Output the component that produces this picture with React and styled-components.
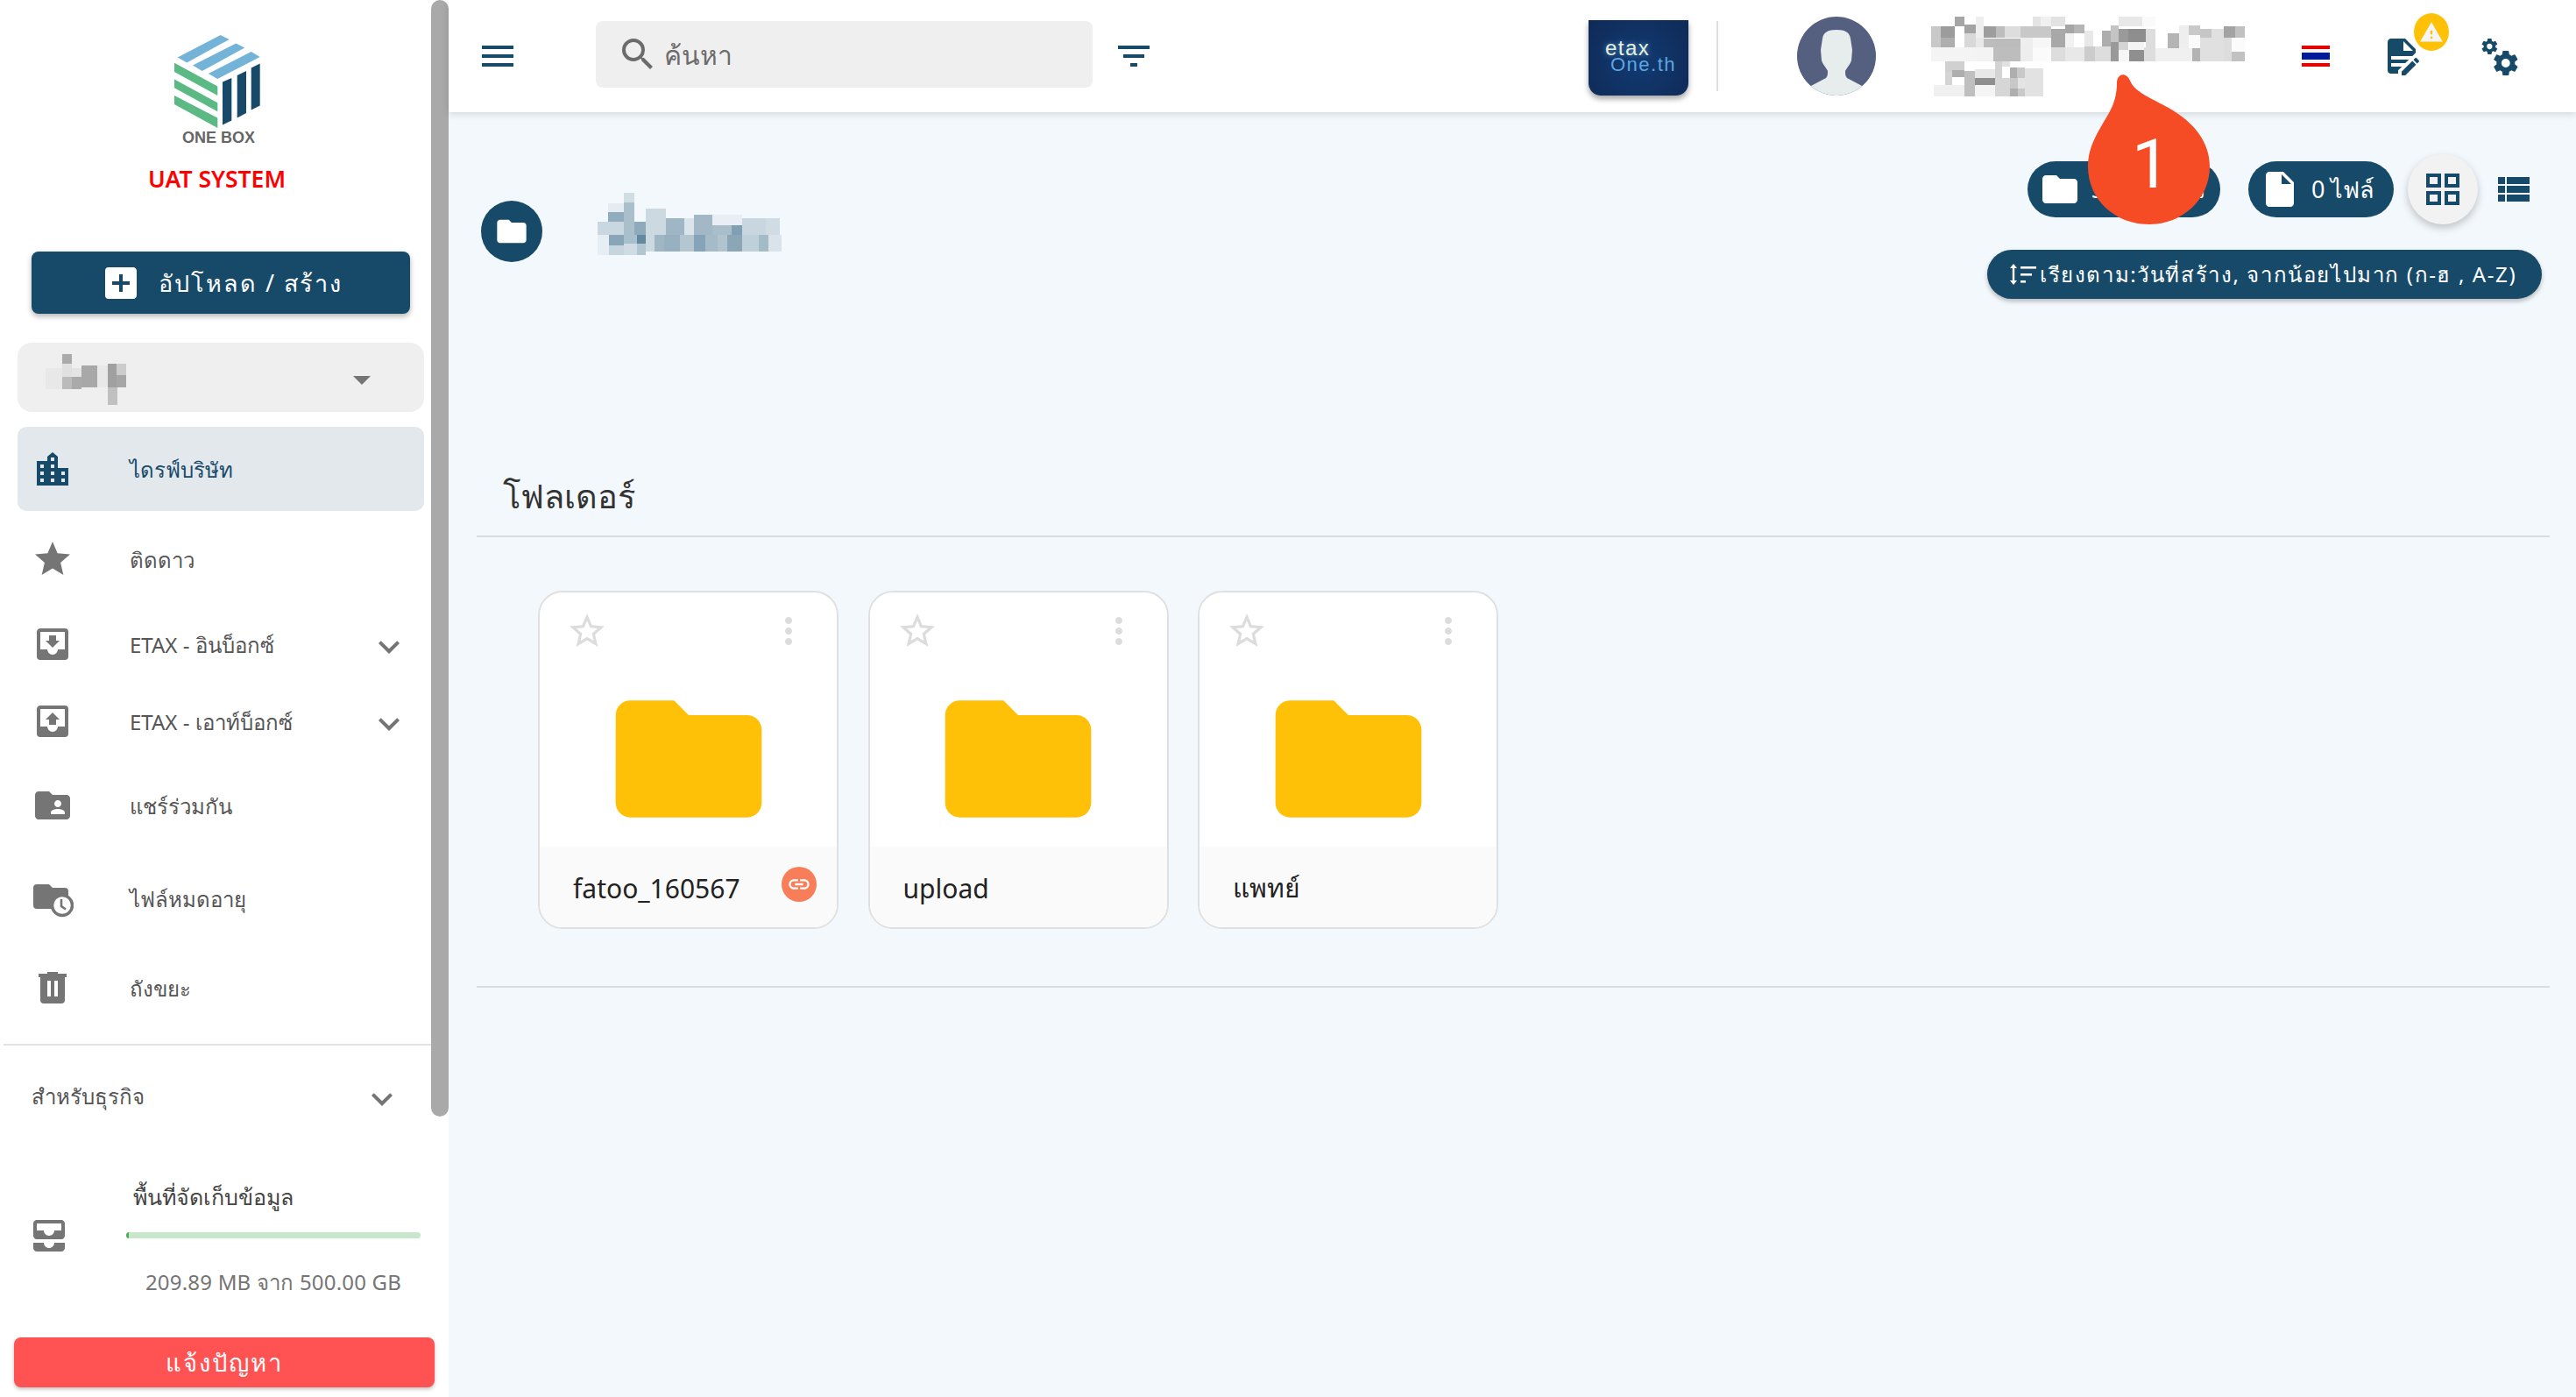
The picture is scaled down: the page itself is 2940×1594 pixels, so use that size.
import React from "react";
import styled, { createGlobalStyle } from "styled-components";
import {
  MdAddBox,
  MdAllInbox,
  MdArrowDropDown,
  MdExpandMore,
  MdFilterList,
  MdFolder,
  MdFolderShared,
  MdInsertDriveFile,
  MdLink,
  MdMenu,
  MdMoreVert,
  MdSearch,
  MdStar,
  MdStarBorder,
  MdViewList,
  MdWarning,
} from "react-icons/md";

const NAVY = "#174a69";

const GlobalStyle = createGlobalStyle`
  html, body {
    margin: 0;
    height: 100%;
    overflow: hidden;
    background: #f3f8fc;
    font-family: "Noto Sans", "Open Sans", sans-serif;
  }
`;

const Page = styled.div`
  position: relative;
  display: flex;
  width: 2940px;
  height: 1594px;
  overflow: hidden;
`;

/* ---------- sidebar ---------- */

const Sidebar = styled.aside`
  display: flex;
  flex: 0 0 512px;
  height: 100%;
  background: #fff;
`;

const SideBody = styled.div`
  display: flex;
  flex-direction: column;
  flex: 0 0 492px;
  min-width: 0;
`;

const ScrollTrack = styled.div`
  flex: 0 0 20px;
`;

const ScrollThumb = styled.div`
  height: 1274px;
  background: #a9a9a9;
  border-radius: 10px;
`;

const Brand = styled.div`
  display: flex;
  flex-direction: column;
  height: 287px;
  padding-top: 40px;
  box-sizing: border-box;
  align-items: center;
  padding-left: 4px;
`;

const BrandCaption = styled.div`
  margin: 1px 0 0 3px;
  font-family: "Liberation Sans", sans-serif;
  font-size: 18px;
  line-height: 20px;
  font-weight: 700;
  color: #666;
`;

const SystemName = styled.div`
  margin-top: 19px;
  margin-left: -1px;
  font-size: 26.5px;
  line-height: 36px;
  font-weight: 600;
  color: #f00;
`;

const UploadButton = styled.button`
  display: flex;
  align-items: center;
  gap: 19px;
  width: 432px;
  height: 71px;
  margin-left: 36px;
  padding: 0 0 0 78px;
  border: 0;
  border-radius: 8px;
  background: ${NAVY};
  color: #fff;
  font: inherit;
  font-size: 27px;
  letter-spacing: 2px;
  box-shadow: 0 3px 6px rgba(0, 0, 0, 0.3);
`;

const UploadLabel = styled.span`
  padding-top: 2px;
`;

const Switcher = styled.div`
  display: flex;
  align-items: center;
  justify-content: space-between;
  width: 464px;
  height: 79px;
  margin: 33px 0 0 20px;
  padding: 4px 47px 0 32px;
  box-sizing: border-box;
  border-radius: 16px;
  background: #efefef;
  color: #757575;
`;

const NavRow = styled.div`
  display: flex;
  align-items: center;
  width: 464px;
  height: ${(p) => p.$h}px;
  margin-top: ${(p) => p.$mt || 0}px;
  margin-left: 20px;
  padding-right: 16px;
  box-sizing: border-box;
  border-radius: 10px;
  background: ${(p) => (p.$active ? "#e3e8ed" : "transparent")};
  color: ${(p) => (p.$active ? NAVY : "#555")};
  font-size: 24px;
`;

const NavIcon = styled.span`
  display: flex;
  justify-content: center;
  flex: 0 0 80px;
  margin-right: 48px;
  color: ${(p) => (p.$active ? NAVY : "#757575")};
`;

const NavLabel = styled.span`
  flex: 1;
  padding-top: 2px;
`;

const NavChevron = styled.span`
  display: flex;
  margin-top: 6px;
  color: #757575;
`;

const SideDivider = styled.div`
  width: 488px;
  height: 2px;
  margin: 18px 0 0 4px;
  background: #e3e3e3;
`;

const SectionRow = styled.div`
  display: flex;
  align-items: center;
  justify-content: space-between;
  height: 116px;
  padding: 0 32px 0 36px;
  color: #555;
  font-size: 24px;
`;

const Storage = styled.div`
  display: flex;
  align-items: flex-start;
  height: 217px;
  padding: 31px 0 0 32px;
  box-sizing: border-box;
  color: #757575;
`;

const StorageIcon = styled.span`
  display: flex;
  margin-top: 46px;
`;

const StorageInfo = styled.div`
  display: flex;
  flex-direction: column;
  width: 336px;
  margin-left: 64px;
`;

const StorageLabel = styled.div`
  margin-left: 8px;
  height: 50px;
  line-height: 50px;
  font-size: 25px;
  color: #444;
`;

const StorageBar = styled.div`
  height: 7px;
  margin-top: 16px;
  border-radius: 4px;
  background: #c8e6c9;
  overflow: hidden;
`;

const StorageFill = styled.div`
  width: 3px;
  height: 100%;
  background: #4caf50;
`;

const StorageText = styled.div`
  margin-top: 32px;
  text-align: center;
  font-size: 24px;
  letter-spacing: 0.2px;
  line-height: 36px;
  color: #757575;
`;

const ReportButton = styled.button`
  display: block;
  width: 480px;
  height: 57px;
  margin: 0 0 0 16px;
  border: 0;
  border-radius: 8px;
  background: #ff5252;
  color: #fff;
  font: inherit;
  font-size: 27.5px;
  letter-spacing: 2px;
  box-shadow: 0 2px 4px rgba(0, 0, 0, 0.25);
`;

/* ---------- top bar ---------- */

const Main = styled.main`
  display: flex;
  flex-direction: column;
  flex: 1;
  min-width: 0;
  background: #f3f8fc;
`;

const TopBar = styled.header`
  display: flex;
  align-items: center;
  flex: 0 0 128px;
  padding-left: 32px;
  background: #fff;
  color: ${NAVY};
  box-shadow: 0 2px 8px rgba(0, 0, 0, 0.14);
`;

const SearchBox = styled.div`
  display: flex;
  align-items: center;
  gap: 6px;
  width: 567px;
  height: 76px;
  margin: -4px 23px 0 88px;
  padding-left: 24px;
  box-sizing: border-box;
  border-radius: 8px;
  background: #efefef;
  color: #6b6b6b;
  font-size: 30px;
`;

const SearchLabel = styled.span`
  padding-top: 3px;
`;

const EtaxTile = styled.div`
  display: flex;
  flex-direction: column;
  justify-content: center;
  flex: 0 0 114px;
  height: 86px;
  margin: 4px 0 0 495px;
  padding: 0 0 4px 19px;
  box-sizing: border-box;
  border-radius: 0 0 14px 14px;
  background: radial-gradient(circle at 50% 55%, #123a72, #0f2a56);
  box-shadow: 0 4px 6px rgba(0, 0, 0, 0.35);
  font-family: "Liberation Sans", sans-serif;
  line-height: 19px;
  letter-spacing: 1.5px;
`;

const EtaxTop = styled.span`
  color: #e8f0d8;
  font-size: 24px;
  text-shadow: 0 0 6px rgba(94, 166, 224, 0.9);
`;

const EtaxBottom = styled.span`
  margin-left: 6px;
  color: #5ea6e0;
  font-size: 22px;
`;

const BarDivider = styled.div`
  flex: 0 0 2px;
  height: 80px;
  margin: 0 90px 0 32px;
  background: #e0e0e0;
`;

const Avatar = styled.svg`
  flex: 0 0 90px;
  margin-right: 62px;
`;

const ActionIcon = styled.span`
  position: relative;
  display: flex;
  margin-left: ${(p) => p.$left || 0}px;
`;

const WarnBadge = styled.span`
  position: absolute;
  top: -25px;
  left: 38px;
  display: flex;
  align-items: center;
  justify-content: center;
  width: 40px;
  height: 43px;
  border-radius: 50%;
  background: #ffc107;
  color: #f5f5f5;
`;

/* ---------- content ---------- */

const HeadArea = styled.section`
  display: flex;
  justify-content: space-between;
  height: 412px;
  padding: 48px 39px 0 37px;
  box-sizing: border-box;
`;

const FolderCrumb = styled.div`
  display: flex;
  align-items: flex-start;
  gap: 63px;
  margin-top: 44px;
`;

const CrumbIcon = styled.span`
  display: flex;
  align-items: center;
  justify-content: center;
  width: 70px;
  height: 70px;
  margin-top: 9px;
  border-radius: 50%;
  background: ${NAVY};
  color: #fff;
`;

const HeadTools = styled.div`
  display: flex;
  flex-direction: column;
  align-items: flex-end;
`;

const ToolRow = styled.div`
  display: flex;
  align-items: center;
  padding-right: 8px;
  height: 80px;
`;

const CountPill = styled.div`
  display: flex;
  align-items: center;
  gap: 12px;
  width: ${(p) => p.$w}px;
  height: 64px;
  margin-right: ${(p) => p.$gap}px;
  padding-left: ${(p) => p.$pad}px;
  box-sizing: border-box;
  border-radius: 32px;
  background: ${NAVY};
  color: #fff;
  font-size: 27px;
  white-space: nowrap;
`;

const ToggleButton = styled.span`
  display: flex;
  align-items: center;
  justify-content: center;
  width: 80px;
  height: 80px;
  margin-right: 17px;
  border-radius: 50%;
  background: #f2f2f2;
  box-shadow: 0 4px 10px rgba(0, 0, 0, 0.22);
`;

const ListToggle = styled.span`
  display: flex;
  color: ${NAVY};
`;

const SortPill = styled.div`
  display: flex;
  align-items: center;
  gap: 4px;
  width: 633px;
  height: 56px;
  margin-top: 29px;
  padding-left: 26px;
  box-sizing: border-box;
  border-radius: 28px;
  background: ${NAVY};
  color: #fff;
  font-size: 24px;
  letter-spacing: 1.6px;
  white-space: nowrap;
  box-shadow: 0 3px 5px rgba(0, 0, 0, 0.25);
`;

const SectionHead = styled.h2`
  height: 73px;
  margin: 0 30px 0 32px;
  padding-left: 30px;
  box-sizing: border-box;
  border-bottom: 2px solid #d7dde1;
  font-size: 38px;
  line-height: 50px;
  font-weight: 400;
  color: #333;
`;

const CardGrid = styled.div`
  display: flex;
  gap: 33.5px;
  margin: 61px 0 0 102px;
`;

const Card = styled.article`
  display: flex;
  flex-direction: column;
  width: 343px;
  height: 386px;
  box-sizing: border-box;
  border: 2px solid #e0e0e0;
  border-radius: 28px;
  background: #fff;
  overflow: hidden;
`;

const CardTop = styled.div`
  display: flex;
  justify-content: space-between;
  height: 90px;
  padding: 20px 31px 0 30px;
  box-sizing: border-box;
  color: #dcdcdc;
`;

const CardArt = styled.div`
  display: flex;
  justify-content: center;
  height: 200px;
  color: #ffc107;
`;

const CardFoot = styled.div`
  display: flex;
  align-items: center;
  justify-content: space-between;
  flex: 1;
  padding: 2px 23px 0 38px;
  background: #fafafa;
  color: #222;
  font-size: 30px;
`;

const LinkBadge = styled.span`
  display: flex;
  align-items: center;
  justify-content: center;
  width: 40px;
  height: 40px;
  margin-top: -8px;
  border-radius: 50%;
  background: #f77e59;
  color: #fff;
`;

const EndRule = styled.div`
  height: 2px;
  margin: 65px 30px 0 32px;
  background: #d7dde1;
`;

/* ---------- annotation ---------- */

const Callout = styled.div`
  position: absolute;
  left: 2383px;
  top: 85px;
  width: 139px;
  height: 171px;
`;

const CalloutNumber = styled.span`
  position: absolute;
  left: 5px;
  right: 0;
  top: 58px;
  text-align: center;
  font-family: Roboto, sans-serif;
  font-size: 78px;
  line-height: 90px;
  color: #fff;
`;

// pixelated blur blocks, coordinates taken off the picture
const NAME_BLOCKS = [
  [84,24,33,33,"#a6a6a6"],[156,24,27,33,"#eee"],[351,24,27,33,"#e4e4e4"],[378,24,36,33,"#f0f0f0"],[414,24,48,33,"#e2e2e2"],[645,24,81,33,"#e8e8e8"],[726,24,45,33,"#fafafa"],
  [3,57,33,39,"#c8c8c8"],[36,57,48,39,"#9c9c9c"],[117,51,39,30,"#a3a3a3"],[156,57,27,39,"#eee"],[183,57,42,39,"#9d9d9d"],[225,57,30,39,"#bdbdbd"],[255,57,54,39,"#ddd"],[309,57,105,39,"#c8c8c8"],[414,66,48,63,"#a8a8a8"],[462,51,30,30,"#a5a5a5"],[492,51,36,30,"#b5b5b5"],[528,72,30,57,"#e8e8e8"],[588,72,30,57,"#adadad"],[618,54,27,57,"#c4c4c4"],[645,66,33,45,"#9a9a9a"],[678,66,60,45,"#8e8e8e"],[738,66,33,63,"#ddd"],[813,81,39,51,"#b4b4b4"],[852,54,33,78,"#eee"],[885,54,39,33,"#c9c9c9"],[924,66,39,30,"#c6c6c6"],[963,66,42,30,"#e0e0e0"],[1005,57,39,39,"#a3a3a3"],[1044,57,33,39,"#c1c1c1"],
  [3,96,33,33,"#c8c8c8"],[36,96,48,33,"#aeaeae"],[117,81,39,48,"#d8d8d8"],[156,96,27,33,"#e8e8e8"],[183,99,42,30,"#bcbcbc"],[225,99,84,30,"#bbb"],[309,96,42,33,"#eee"],[351,96,63,33,"#f6f6f6"],[462,81,30,48,"#f2f2f2"],[645,111,33,27,"#d4d4d4"],[681,111,51,27,"#f4f4f4"],[885,87,39,45,"#fbfbfb"],[924,96,81,33,"#e0e0e0"],[1005,96,27,33,"#ddd"],[1032,96,45,48,"#fbfbfb"],
  [3,129,153,48,"#f4f4f4"],[156,129,60,48,"#f3f3f3"],[216,129,93,48,"#bdbdbd"],[309,129,42,48,"#eee"],[351,129,63,48,"#fbfbfb"],[414,129,48,48,"#ddd"],[462,129,66,48,"#e8e8e8"],[528,126,36,51,"#ccc"],[564,126,54,51,"#ddd"],[618,111,27,66,"#999"],[645,138,36,39,"#f6f6f6"],[681,138,51,39,"#8f8f8f"],[732,129,39,48,"#ddd"],[771,132,126,45,"#f0f0f0"],[897,132,27,45,"#b3b3b3"],[924,129,81,48,"#e0e0e0"],[1005,129,27,48,"#ddd"],[1032,144,45,33,"#c1c1c1"],
  [51,177,66,33,"#d0d0d0"],[222,177,24,57,"#d3d3d3"],[246,177,27,18,"#e0e0e0"],[51,210,24,48,"#d4d4d4"],[75,207,42,24,"#aeaeae"],[117,210,36,87,"#bfbfbf"],[153,204,69,30,"#e8e8e8"],[153,234,69,24,"#8f8f8f"],[12,258,105,39,"#f0f0f0"],[153,258,69,39,"#f4f4f4"],[222,234,51,63,"#d6d6d6"],[273,198,24,36,"#aeaeae"],[297,198,27,36,"#c9c9c9"],[273,234,27,36,"#c8c8c8"],[300,234,24,36,"#e4e4e4"],[273,270,27,27,"#aeaeae"],[300,270,24,27,"#c9c9c9"],[324,201,63,96,"#e2e2e2"],
];

const CRUMB_BLOCKS = [
  [335,660,20,33,"#d0dde5"],[303,695,32,31,"#e4ebf1"],[335,693,20,67,"#a9bfcc"],[303,726,32,34,"#91adbd"],[282,760,53,44,"#c9d7e0"],[335,760,20,44,"#a9bfcc"],[355,760,23,44,"#8fabbb"],[378,714,40,90,"#ccd9e1"],[418,747,37,57,"#9fb6c4"],[455,747,19,57,"#dbe4ea"],[474,735,36,69,"#a2b8c6"],[510,735,60,35,"#e8eef4"],[510,770,38,34,"#a9bdca"],[548,770,22,34,"#7fa0b4"],[570,747,47,57,"#c9d6df"],[617,747,28,57,"#d0dce4"],
  [282,804,23,69,"#e6edf3"],[305,804,30,36,"#89a6b8"],[305,840,30,33,"#c6d5de"],[335,804,25,30,"#a8bfcc"],[335,834,25,39,"#cfdce4"],[360,804,18,30,"#6389a1"],[360,834,18,39,"#b2c6d1"],[378,804,17,56,"#cbd9e1"],[395,804,20,56,"#9fb7c5"],[415,804,31,56,"#97b1c0"],[446,804,28,56,"#b5c6d1"],[474,804,23,56,"#85a4b7"],[497,804,23,56,"#a6bbc8"],[520,804,20,56,"#b0c3ce"],[540,804,30,56,"#8aa6b7"],[570,804,33,56,"#c0d0da"],[603,804,19,56,"#a3bac7"],[622,804,26,56,"#dae3ea"],
];

const ORG_BLOCKS = [
  [213,1057,33,30,"#aaa"],[213,1087,33,38,"#e0e0e0"],[156,1098,57,64,"#e8e8e8"],[246,1098,33,27,"#e4e4e4"],[279,1090,54,67,"#a8a8a8"],[213,1125,33,37,"#bbb"],[246,1125,33,37,"#aaa"],[333,1090,36,67,"#e8e8e8"],[369,1087,30,33,"#a0a0a0"],[399,1087,33,33,"#ccc"],[369,1120,30,37,"#a0a0a0"],[399,1120,33,37,"#a6a6a6"],[369,1157,33,53,"#c0c0c0"],
];

const Mosaic = ({ blocks, viewBox, width, height }) => (
  <svg width={width} height={height} viewBox={viewBox} preserveAspectRatio="none" shapeRendering="crispEdges">
    {blocks.map(([x, y, w, h, c], i) => (
      <rect key={i} x={x} y={y} width={w} height={h} fill={c} />
    ))}
  </svg>
);

const Glyph = ({ d, size = 48, fill = "currentColor" }) => (
  <svg width={size} height={size} viewBox="0 0 24 24" fill={fill}>
    <path d={d} />
  </svg>
);

const INBOX_DOWN = "M16,10H14V7H10V10H8L12,14M19,15H15A3,3 0 0,1 12,18A3,3 0 0,1 9,15H5V5H19M19,3H5C3.89,3 3,3.9 3,5V19A2,2 0 0,0 5,21H19A2,2 0 0,0 21,19V5A2,2 0 0,0 19,3Z";
const INBOX_UP = "M14,14H10V11H8L12,7L16,11H14V14M5,15V5H19V15H15A3,3 0 0,1 12,18A3,3 0 0,1 9,15H5M19,3H5C3.89,3 3,3.9 3,5V19A2,2 0 0,0 5,21H19A2,2 0 0,0 21,19V5A2,2 0 0,0 19,3Z";
const TRASH = "M9,3V4H4V6H5V19A2,2 0 0,0 7,21H17A2,2 0 0,0 19,19V6H20V4H15V3H9M9,8H11V17H9V8M13,8H15V17H13V8Z";
const DOC_EDIT = "M6,2C4.89,2 4,2.89 4,4V20A2,2 0 0,0 6,22H10V20.09L12.09,18H6V16H14.09L16.09,14H6V12H18.09L20,10.09V8L14,2H6M13,3.5L18.5,9H13V3.5M20.15,13C20,13 19.86,13.05 19.75,13.16L18.73,14.18L20.82,16.26L21.84,15.25C22.05,15.03 22.05,14.67 21.84,14.46L20.54,13.16C20.43,13.05 20.29,13 20.15,13M18.14,14.77L12,20.92V23H14.08L20.23,16.85L18.14,14.77Z";
const COGS = "M15.9,18.45C17.25,18.45 18.35,17.35 18.35,16C18.35,14.65 17.25,13.55 15.9,13.55C14.54,13.55 13.45,14.65 13.45,16C13.45,17.35 14.54,18.45 15.9,18.45M21.1,16.68L22.58,17.84C22.71,17.95 22.75,18.13 22.66,18.29L21.26,20.71C21.17,20.86 21,20.92 20.83,20.86L19.09,20.16C18.73,20.44 18.34,20.67 17.91,20.85L17.64,22.7C17.61,22.87 17.47,23 17.3,23H14.5C14.32,23 14.18,22.87 14.15,22.7L13.89,20.85C13.46,20.67 13.07,20.44 12.71,20.16L10.96,20.86C10.81,20.92 10.62,20.86 10.54,20.71L9.14,18.29C9.05,18.13 9.09,17.95 9.22,17.84L10.7,16.68L10.65,16L10.7,15.31L9.22,14.16C9.09,14.05 9.05,13.86 9.14,13.71L10.54,11.29C10.62,11.13 10.81,11.07 10.96,11.13L12.71,11.84C13.07,11.56 13.46,11.32 13.89,11.15L14.15,9.29C14.18,9.13 14.32,9 14.5,9H17.3C17.47,9 17.61,9.13 17.64,9.29L17.91,11.15C18.34,11.32 18.73,11.56 19.09,11.84L20.83,11.13C21,11.07 21.17,11.13 21.26,11.29L22.66,13.71C22.75,13.86 22.71,14.05 22.58,14.16L21.1,15.31L21.15,16L21.1,16.68M6.69,8.07C7.56,8.07 8.26,7.37 8.26,6.5C8.26,5.63 7.56,4.92 6.69,4.92A1.58,1.58 0 0,0 5.11,6.5C5.11,7.37 5.82,8.07 6.69,8.07M10.03,6.94L11,7.68C11.07,7.75 11.09,7.87 11.03,7.97L10.13,9.53C10.08,9.63 9.96,9.67 9.86,9.63L8.74,9.18L8,9.62L7.81,10.81C7.79,10.92 7.7,11 7.59,11H5.79C5.67,11 5.58,10.92 5.56,10.81L5.4,9.62L4.64,9.18L3.5,9.63C3.41,9.67 3.3,9.63 3.24,9.53L2.34,7.97C2.28,7.87 2.31,7.75 2.39,7.68L3.34,6.94L3.31,6.5L3.34,6.06L2.39,5.32C2.31,5.25 2.28,5.13 2.34,5.03L3.24,3.47C3.3,3.37 3.41,3.33 3.5,3.37L4.63,3.82L5.4,3.38L5.56,2.19C5.58,2.08 5.67,2 5.79,2H7.59C7.7,2 7.79,2.08 7.81,2.19L7.97,3.38L8.74,3.82L9.86,3.37C9.96,3.33 10.08,3.37 10.13,3.47L11.03,5.03C11.09,5.13 11.07,5.25 11,5.32L10.03,6.06L10.06,6.5L10.03,6.94Z";

const BoxLogo = () => (
  <svg width="98" height="106" viewBox="0 0 98 106">
    <g fill="#74b3d8">
      <polygon points="3.7,25.6 52.7,0 62.7,5 14.3,31.4" />
      <polygon points="21,34.4 70.3,9.6 80.3,14.5 31.7,40.9" />
      <polygon points="38.7,44 87.7,19 97.7,24.9 49.3,50" />
    </g>
    <g fill="#5bb984">
      <polygon points="0,31.8 49.3,58.5 49.3,68.9 0,42" />
      <polygon points="0,50.5 49.3,77.2 49.3,87.2 0,60.3" />
      <polygon points="0,69 49.3,94.5 49.3,106 0,79" />
    </g>
    <g fill="#174a69">
      <polygon points="55,53.6 65.3,49 65.3,97.6 55,102.6" />
      <polygon points="71.7,46 82,41 82,89 71.7,94.5" />
      <polygon points="87.7,37.5 97.7,32.5 97.7,80.4 87.7,85.4" />
    </g>
  </svg>
);

const BuildingIcon = () => (
  <svg width="36" height="38" viewBox="0 0 36 38" fill={NAVY}>
    <path
      fillRule="evenodd"
      d="M12 5 L18 0 L24 5 V18 H36 V38 H0 V10 H12 Z M4 14 V18 H8 V14 Z M4 22 V26 H8 V22 Z M4 30 V34 H8 V30 Z M16 6 V10 H20 V6 Z M16 14 V18 H20 V14 Z M16 22 V26 H20 V22 Z M16 30 V34 H20 V30 Z M28 22 V26 H32 V22 Z M28 30 V34 H32 V30 Z"
    />
  </svg>
);

const FolderClockIcon = () => (
  <svg width="48" height="48" viewBox="0 0 48 48">
    <path fill="#757575" d="M6 8h14l4 4h14a4 4 0 0 1 4 4v16a4 4 0 0 1-4 4H6a4 4 0 0 1-4-4V12a4 4 0 0 1 4-4z" />
    <circle cx="35" cy="32" r="11.5" fill="#fff" stroke="#757575" strokeWidth="3.5" />
    <path d="M34 25v8l5 3.5" fill="none" stroke="#757575" strokeWidth="2.6" />
  </svg>
);

const UserAvatar = () => (
  <Avatar width="90" height="90" viewBox="0 0 90 90">
    <defs>
      <clipPath id="avatar-clip">
        <circle cx="45" cy="45" r="45" />
      </clipPath>
    </defs>
    <circle cx="45" cy="45" r="45" fill="#556080" />
    <path
      clipPath="url(#avatar-clip)"
      fill="#e7eced"
      d="M14 80 L33 70 C35 68 35 65 35 62 C33 58 29 54 28 50 L27 38 L29 25 C30 18 35 15 45 15 C55 15 60 18 61 25 L63 38 L62 50 C61 54 57 58 55 62 C55 65 55 68 57 70 L76 80 L70 95 H20 Z"
    />
  </Avatar>
);

const ThaiFlag = () => (
  <svg width="32" height="24" viewBox="0 0 32 24" shapeRendering="crispEdges">
    <rect width="32" height="24" fill="#f4f4f4" />
    <rect width="32" height="4" fill="#e60000" />
    <rect y="8" width="32" height="8" fill="#001a9a" />
    <rect y="20" width="32" height="4" fill="#e60000" />
  </svg>
);

const GridIcon = () => (
  <svg width="38" height="36" viewBox="0 0 38 36" fill="none" stroke={NAVY} strokeWidth="4">
    <rect x="2" y="2" width="13" height="12" />
    <rect x="23" y="2" width="13" height="12" />
    <rect x="2" y="22" width="13" height="12" />
    <rect x="23" y="22" width="13" height="12" />
  </svg>
);

const SortIcon = () => (
  <svg width="30" height="24" viewBox="0 0 30 24" fill="#fff">
    <path d="M4 0 L8 5 H5.2 V19 H8 L4 24 L0 19 H2.8 V5 H0 Z" />
    <rect x="12" y="3" width="18" height="2.6" />
    <rect x="12" y="11" width="13" height="2.6" />
    <rect x="12" y="19" width="6" height="2.6" />
  </svg>
);

const FolderCard = ({ name, linked }) => (
  <Card>
    <CardTop>
      <MdStarBorder size={48} />
      <MdMoreVert size={48} />
    </CardTop>
    <CardArt>
      <MdFolder size={200} />
    </CardArt>
    <CardFoot>
      <span>{name}</span>
      {linked && (
        <LinkBadge>
          <MdLink size={28} />
        </LinkBadge>
      )}
    </CardFoot>
  </Card>
);

const App = () => {
  return (
    <Page>
      <GlobalStyle />
      <Sidebar>
        <SideBody>
          <Brand>
            <BoxLogo />
            <BrandCaption>ONE BOX</BrandCaption>
            <SystemName>UAT SYSTEM</SystemName>
          </Brand>
          <UploadButton>
            <MdAddBox size={48} />
            <UploadLabel>อัปโหลด / สร้าง</UploadLabel>
          </UploadButton>
          <Switcher>
            <Mosaic blocks={ORG_BLOCKS} viewBox="156 1057 276 153" width={92} height={58} />
            <MdArrowDropDown size={48} />
          </Switcher>
          <NavRow $h={96} $active $mt={17}>
            <NavIcon $active>
              <BuildingIcon />
            </NavIcon>
            <NavLabel>ไดรฟ์บริษัท</NavLabel>
          </NavRow>
          <NavRow $h={110}>
            <NavIcon>
              <MdStar size={48} />
            </NavIcon>
            <NavLabel>ติดดาว</NavLabel>
          </NavRow>
          <NavRow $h={84}>
            <NavIcon>
              <Glyph d={INBOX_DOWN} />
            </NavIcon>
            <NavLabel>ETAX - อินบ็อกซ์</NavLabel>
            <NavChevron>
              <MdExpandMore size={48} />
            </NavChevron>
          </NavRow>
          <NavRow $h={92}>
            <NavIcon>
              <Glyph d={INBOX_UP} />
            </NavIcon>
            <NavLabel>ETAX - เอาท์บ็อกซ์</NavLabel>
            <NavChevron>
              <MdExpandMore size={48} />
            </NavChevron>
          </NavRow>
          <NavRow $h={100}>
            <NavIcon>
              <MdFolderShared size={48} />
            </NavIcon>
            <NavLabel>แชร์ร่วมกัน</NavLabel>
          </NavRow>
          <NavRow $h={112}>
            <NavIcon>
              <FolderClockIcon />
            </NavIcon>
            <NavLabel>ไฟล์หมดอายุ</NavLabel>
          </NavRow>
          <NavRow $h={92}>
            <NavIcon>
              <Glyph d={TRASH} />
            </NavIcon>
            <NavLabel>ถังขยะ</NavLabel>
          </NavRow>
          <SideDivider />
          <SectionRow>
            สำหรับธุรกิจ
            <NavChevron>
              <MdExpandMore size={48} />
            </NavChevron>
          </SectionRow>
          <Storage>
            <StorageIcon>
              <MdAllInbox size={48} />
            </StorageIcon>
            <StorageInfo>
              <StorageLabel>พื้นที่จัดเก็บข้อมูล</StorageLabel>
              <StorageBar>
                <StorageFill />
              </StorageBar>
              <StorageText>209.89 MB จาก 500.00 GB</StorageText>
            </StorageInfo>
          </Storage>
          <ReportButton>แจ้งปัญหา</ReportButton>
        </SideBody>
        <ScrollTrack>
          <ScrollThumb />
        </ScrollTrack>
      </Sidebar>

      <Main>
        <TopBar>
          <MdMenu size={48} />
          <SearchBox>
            <MdSearch size={48} />
            <SearchLabel>ค้นหา</SearchLabel>
          </SearchBox>
          <MdFilterList size={48} />
          <EtaxTile>
            <EtaxTop>etax</EtaxTop>
            <EtaxBottom>One.th</EtaxBottom>
          </EtaxTile>
          <BarDivider />
          <UserAvatar />
          <Mosaic blocks={NAME_BLOCKS} viewBox="0 24 1080 273" width={360} height={91} />
          <ActionIcon $left={64}>
            <ThaiFlag />
          </ActionIcon>
          <ActionIcon $left={58}>
            <Glyph d={DOC_EDIT} />
            <WarnBadge>
              <MdWarning size={28} />
            </WarnBadge>
          </ActionIcon>
          <ActionIcon $left={63}>
            <Glyph d={COGS} />
          </ActionIcon>
        </TopBar>

        <HeadArea>
          <FolderCrumb>
            <CrumbIcon>
              <MdFolder size={40} />
            </CrumbIcon>
            <Mosaic blocks={CRUMB_BLOCKS} viewBox="282 660 366 213" width={210} height={71} />
          </FolderCrumb>
          <HeadTools>
            <ToolRow>
              <CountPill $w={220} $gap={32} $pad={13}>
                <MdFolder size={48} />3 โฟลเดอร์
              </CountPill>
              <CountPill $w={166} $gap={16} $pad={12}>
                <MdInsertDriveFile size={48} />0 ไฟล์
              </CountPill>
              <ToggleButton>
                <GridIcon />
              </ToggleButton>
              <ListToggle>
                <MdViewList size={48} />
              </ListToggle>
            </ToolRow>
            <SortPill>
              <SortIcon />
              เรียงตาม:วันที่สร้าง, จากน้อยไปมาก (ก-ฮ , A-Z)
            </SortPill>
          </HeadTools>
        </HeadArea>

        <SectionHead>โฟลเดอร์</SectionHead>
        <CardGrid>
          <FolderCard name="fatoo_160567" linked />
          <FolderCard name="upload" />
          <FolderCard name="แพทย์" />
        </CardGrid>
        <EndRule />
      </Main>

      <Callout>
        <svg width="139" height="171" viewBox="0 0 139 171" fill="#f54c25">
          <path d="M33 10 C33 -2 44 -3 48 7 C53 20 72 27 92 38 C122 55 139 78 139 105 C139 142 108 171 70 171 C30 171 0 142 0 105 C0 80 14 62 25 42 C30 33 33 22 33 10 Z" />
        </svg>
        <CalloutNumber>1</CalloutNumber>
      </Callout>
    </Page>
  );
};

export default App;
